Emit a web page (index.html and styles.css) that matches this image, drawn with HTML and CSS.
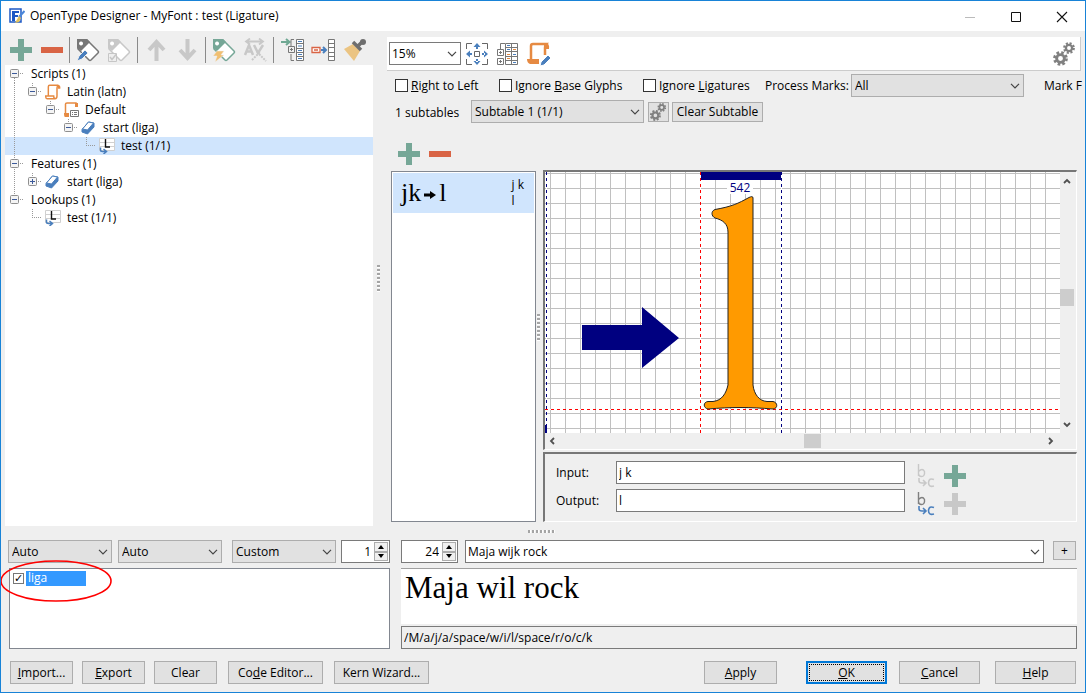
FILE: index.html
```html
<!DOCTYPE html>
<html lang="en">
<head>
<meta charset="utf-8">
<title>OpenType Designer</title>
<link rel="stylesheet" href="styles.css">
</head>
<body>
<svg class="defs" aria-hidden="true">
  <symbol id="plus" viewBox="0 0 24 24"><path fill="currentColor" d="M9 1h6v8h8v6h-8v8H9v-8H1V9h8z"/></symbol>
  <symbol id="minus" viewBox="0 0 24 24"><path fill="#d96445" d="M1 9h22v6H1z"/></symbol>
  <symbol id="chevron" viewBox="0 0 10 6"><path d="M1 .8l4 4 4-4" fill="none" stroke="#444" stroke-width="1.2"/></symbol>
  <symbol id="gear" viewBox="-12 -12 24 24">
    <circle r="6.200" fill="none" stroke="#808080" stroke-width="4.600"/>
    <circle r="9.600" fill="none" stroke="#808080" stroke-width="4.400" stroke-dasharray="4.200 3.340"/>
  </symbol>
  <symbol id="gears" viewBox="0 0 24 24">
    <use href="#gear" x="1" y="9" width="15" height="15"/>
    <use href="#gear" x="11" y="0" width="12" height="12"/>
  </symbol>
  <symbol id="v" viewBox="0 0 18 18"><path d="M9.500 0v18" class="dots"/></symbol>
  <symbol id="corner" viewBox="0 0 18 18"><path d="M9.500 0v9M9 8.500h9" class="dots"/></symbol>
  <symbol id="box" viewBox="0 0 18 18"><path d="M15 8.500h3" class="dots"/><rect x="5.500" y="4.500" width="8" height="8" rx="1" fill="#f4f4f4" stroke="#8f8f8f"/><path d="M7 8.500h5" stroke="#3c5a9a"/></symbol>
  <symbol id="eraser" viewBox="0 0 16 16"><path d="M1 9.500L7.500 2 13 3v4l-6.500 7L1 12z" fill="#4a7fbd" stroke="#4a7fbd" stroke-linejoin="round"/><path d="M1.500 9L7.500 2l5 1L6.500 10z" fill="#fff" stroke="#4a7fbd"/></symbol>
  <symbol id="lookup" viewBox="0 0 16 16"><path d="M.5.5h15v12H.5zM.5 4.500h15M.5 8.500h15" fill="#fff" stroke="#d0d0d0"/><path d="M6.500 1v8H11" fill="none" stroke="#111" stroke-width="1.400"/><path d="M1.500 9.500v2.500q0 1.500 2 1.500h3M4.500 11l3 2.500-3 2.500" fill="none" stroke="#4a7fbd" stroke-width="1.500"/></symbol>
  <symbol id="scroll" viewBox="0 0 24 24"><path d="M5 17V4q0-2 2-2h13q-2 1-2 4v12q0 4-3 4H3q-2 0-2-4h12q0 4 3 4" fill="none" stroke="#e68a42" stroke-width="2.200"/><path d="M19 1q4 0 4 4v2h-4z" fill="#e68a42"/></symbol>
  <symbol id="tag" viewBox="0 0 24 24"><path d="M2 2h9l11 11q1 1 0 2l-7 7q-1 1-2 0L2 11z" fill="#fff" stroke="currentColor" stroke-width="1.500"/><path d="M1 1h10l3 3-9 9-4-3zM5 3.500a2 2 0 1 0 .1 0z" fill="currentColor" fill-rule="evenodd"/></symbol>
  <symbol id="subst" viewBox="0 0 18 26"><path d="M1.500 1v12M1.500 8.500q4-4 6 0 .5 5-3 5-3 0-3-3" fill="none" stroke="var(--b)" stroke-width="1.400"/><path d="M2 15v3q0 2 3 2h3M6 17l3 3-3 3M17 16.500q-5-2-5.500 3 0 5 5.500 3.500" fill="none" stroke="var(--c)" stroke-width="1.600"/></symbol>
</svg>

<div class="window">
  <header class="titlebar">
    <svg class="app-icon" viewBox="0 0 16 16"><path d="M1 1h11v13H1z" fill="#fff" stroke="#1d58c4" stroke-width="1.500"/><path d="M3 3h7v2H6v2h3v2H6v4H3z" fill="#1d58c4"/><path d="M15.500 3L10 9" stroke="#4a86d8" stroke-width="2"/><path d="M10 8l2 2-2 4-4 1z" fill="#e0c05a"/></svg>
    <h1>OpenType Designer - MyFont : test (Ligature)</h1>
    <div class="caption-buttons">
      <button aria-label="Minimize"><svg viewBox="0 0 12 12"><path d="M1 6.500h10" stroke="#bbb"/></svg></button>
      <button aria-label="Maximize"><svg viewBox="0 0 12 12"><path d="M1.500 1.500h9v9h-9z" fill="none" stroke="#111"/></svg></button>
      <button aria-label="Close"><svg viewBox="0 0 12 12"><path d="M1 1l10 10M11 1L1 11" stroke="#111" stroke-width="1.100"/></svg></button>
    </div>
  </header>

  <main class="workspace">
    <section class="sidebar">
      <div class="toolbar">
        <div class="group">
          <button class="icon green" aria-label="Add"><svg><use href="#plus"/></svg></button>
          <button class="icon" aria-label="Remove"><svg><use href="#minus"/></svg></button>
        </div>
        <div class="group">
          <button class="icon gray" aria-label="Edit tag"><svg viewBox="0 0 24 24"><use href="#tag"/><path d="M1 23l2-5 6-6 3 3-6 6z" fill="#4a7fbd" stroke="#efefef"/></svg></button>
          <button class="icon pale" aria-label="Check tag" disabled><svg viewBox="0 0 24 24"><use href="#tag"/><path d="M1.500 15.500h8v8h-8z" fill="#efefef" stroke="#c6c6c6"/><path d="M3 19l2 2.500 4-5" fill="none" stroke="#c6c6c6" stroke-width="1.500"/></svg></button>
        </div>
        <div class="group">
          <button class="icon pale" aria-label="Move up" disabled><svg viewBox="0 0 24 24"><path d="M12.500 23V4M5 12l7.500-8 7.500 8" fill="none" stroke="currentColor" stroke-width="4"/></svg></button>
          <button class="icon pale" aria-label="Move down" disabled><svg viewBox="0 0 24 24"><path d="M12.500 1v19M5 12l7.500 8 7.500-8" fill="none" stroke="currentColor" stroke-width="4"/></svg></button>
        </div>
        <div class="group">
          <button class="icon green" aria-label="Auto tag"><svg viewBox="0 0 24 24"><use href="#tag"/><path d="M5 13h7l-3 4h3L3 24l2-6H1z" fill="#f0bf72" stroke="#efefef" stroke-width=".5"/></svg></button>
          <button class="icon pale" aria-label="Clear kerning" disabled><svg viewBox="0 0 24 24"><path d="M3 3.500h17M7 .5l-4 3 4 3M16 .5l4 3-4 3" fill="none" stroke="currentColor" stroke-width="1.800"/><path d="M2 17l4-10 4 10M3.500 13.500h5M11 7l4 8 5-8" fill="none" stroke="currentColor" stroke-width="2.500"/><path d="M14 14l9 9M9 22l8-8" stroke="currentColor" stroke-width="2" stroke-dasharray="2 1"/></svg></button>
        </div>
        <div class="group">
          <button class="icon" aria-label="Expand tree"><svg viewBox="0 0 24 24"><path d="M1 4h7M6 1l3.500 3L6 7" fill="none" stroke="#6fa893" stroke-width="2"/><path d="M14 1.500h-3V8M14 22.500h-3V16M8.500 8.500h6v6h-6zM10 11.500h3M11.500 10v3" fill="none" stroke="#777"/><path d="M16.500 1.500h7v21h-7zM16.500 5.500h7M16.500 10.500h7M16.500 14.500h7M16.500 18.500h7" fill="#fff" stroke="#777"/><path d="M18 3.500h4M18 8h4M18 12.500h4M18 16.500h4M18 20.500h4" stroke="#4a7fbd"/></svg></button>
          <button class="icon" aria-label="Insert"><svg viewBox="0 0 24 24"><path d="M1 9.500h8v5H1zM3 12h4" fill="#fff" stroke="#d96445" stroke-width="1.300"/><path d="M10 12h5M12 9l3 3-3 3" fill="none" stroke="#4a7fbd" stroke-width="2"/><path d="M17.500 1.500h6v21h-6zM17 5.500h7M17 9.500h7M17 14.500h7M17 18.500h7" fill="#fff" stroke="#777"/></svg></button>
          <button class="icon" aria-label="Clean up"><svg viewBox="0 0 24 24"><path d="M2 11l9-5 7 7-6 10z" fill="#ebc482"/><path d="M11 4l8 8M15 9l6-6" stroke="#6e6e6e" stroke-width="3.500"/><circle cx="21" cy="4" r="3" fill="#6e6e6e"/></svg></button>
        </div>
      </div>

      <ul class="tree">
        <li><svg class="cell"><path d="M9.500 13v5" class="dots"/><use href="#box"/></svg><span class="root">Scripts (1)</span></li>
        <li><svg class="cell"><use href="#v"/></svg><svg class="cell"><path d="M9.500 0v4" class="dots"/><use href="#box"/></svg><svg class="ico"><use href="#scroll"/></svg>Latin (latn)</li>
        <li><svg class="cell"><use href="#v"/></svg><i></i><svg class="cell"><path d="M9.500 0v4" class="dots"/><use href="#box"/></svg><svg class="ico" viewBox="0 0 16 16"><path d="M2.500 11V2q0-1 1.500-1h9v3" fill="none" stroke="#e68a42" stroke-width="1.500"/><path d="M1 11h5v4H2q-1 0-1-4zM12 1h3v4h-3z" fill="#e68a42"/><path d="M7.500 8.500h8v6h-8z" fill="#fff" stroke="#777"/><path d="M9 10.500h5M9 12.500h5" stroke="#777" stroke-dasharray="1 1 3"/></svg>Default</li>
        <li><svg class="cell"><use href="#v"/></svg><i></i><i></i><svg class="cell"><path d="M9.500 0v4" class="dots"/><use href="#box"/></svg><svg class="ico"><use href="#eraser"/></svg>start (liga)</li>
        <li class="selected"><svg class="cell"><use href="#v"/></svg><i></i><i></i><i></i><svg class="cell"><use href="#corner"/></svg><svg class="ico"><use href="#lookup"/></svg>test (1/1)</li>
        <li><svg class="cell"><use href="#v"/><use href="#box"/></svg><span class="root">Features (1)</span></li>
        <li><svg class="cell"><use href="#v"/></svg><svg class="cell"><path d="M9.500 0v4" class="dots"/><use href="#box"/><path d="M9.500 6v5" stroke="#3c5a9a"/></svg><svg class="ico"><use href="#eraser"/></svg>start (liga)</li>
        <li><svg class="cell"><path d="M9.500 0v4" class="dots"/><use href="#box"/></svg><span class="root">Lookups (1)</span></li>
        <li><i></i><svg class="cell"><use href="#corner"/></svg><svg class="ico"><use href="#lookup"/></svg>test (1/1)</li>
      </ul>
    </section>

    <div class="splitter side"><span class="grip"></span></div>

    <section class="editor">
      <div class="viewbar">
        <div class="combo zoom"><select class="editable" aria-label="Zoom"><option>15%</option></select><svg><use href="#chevron"/></svg></div>
        <button class="icon" aria-label="Fit"><svg viewBox="0 0 24 24"><path d="M1.500 7V1.500H7M17 1.500h5.500V7M1.500 17v5.500H7M17 22.500h5.500V17M9.500 9.500h5v5h-5z" fill="none" stroke="#666"/><path d="M12 1l3.500 4h-7zM12 23l3.500-4h-7zM1 12l4-3.500v7zM23 12l-4-3.500v7zM11 4h2v3h-2zM11 17h2v3h-2zM4 11h3v2H4zM17 11h3v2h-3z" fill="#4a7fbd"/></svg></button>
        <button class="icon" aria-label="Table"><svg viewBox="0 0 24 24"><path d="M4.500 7V1.500H9M1.500 7.500h6v6h-6zM1.500 16.500h6v6h-6zM3 10.500h3M4.500 9v3M3 19.500h3M4.500 18v3M9.500 1.500h12v21h-12zM15.500 1v22M9 5.500h13M9 9.500h13M9 14.500h13M9 18.500h13" fill="none" stroke="#777"/><path d="M11 3.500h3M11 7.500h3M17 12.500h3M17 20.500h3" stroke="#4a7fbd"/><path d="M17 7.500h3M11 12.500h3M11 16.500h3" stroke="#e68a42"/></svg></button>
        <button class="icon" aria-label="Script"><svg viewBox="0 0 24 24"><path d="M4 18V4q0-2 2-2h13q-1 1-1 4v7" fill="none" stroke="#e68a42" stroke-width="2.500"/><path d="M0 17h12v5H3q-3-1-3-5zM18 1q5 0 4 6h-4z" fill="#e68a42"/><path d="M13 24l1-4 7-7 3 3-7 7z" fill="#4a7fbd" stroke="#fff"/></svg></button>
        <button class="icon settings" aria-label="Settings"><svg><use href="#gears"/></svg></button>
      </div>

      <div class="options">
        <label class="c1"><input type="checkbox"><span><u>R</u>ight to Left</span></label>
        <label class="c2"><input type="checkbox"><span>Ignore <u>B</u>ase Glyphs</span></label>
        <label class="c3"><input type="checkbox"><span>Ignore <u>L</u>igatures</span></label>
        <label for="marks" class="marks-label">Process Marks:</label>
        <div class="combo wide"><select id="marks"><option>All</option></select><svg><use href="#chevron"/></svg></div>
        <span class="filter">Mark F</span>
      </div>
      <div class="subtables">
        <label for="subtable">1 subtables</label>
        <div class="combo wide"><select id="subtable"><option>Subtable 1 (1/1)</option></select><svg><use href="#chevron"/></svg></div>
        <button class="push gearbtn" aria-label="Subtable settings"><svg><use href="#gears"/></svg></button>
        <button class="push clear">Clear Subtable</button>
      </div>
      <div class="pairbar">
        <button class="icon green" aria-label="Add pair"><svg><use href="#plus"/></svg></button>
        <button class="icon" aria-label="Remove pair"><svg><use href="#minus"/></svg></button>
      </div>

      <div class="detail">
        <div class="pairs">
          <div class="pair">
            <div class="pair-glyphs">jk<svg viewBox="0 0 12 8"><path d="M0 2.500h6V0l6 4-6 4V5.500H0z"/></svg>l</div>
            <div class="pair-names">j k<br>l</div>
          </div>
        </div>
        <div class="splitter inner"><span class="grip"></span></div>
        <div class="stage">
          <div class="sunken canvas">
            <svg class="drawing">
              <defs><pattern id="grid" x="5" y="1" width="15" height="15" patternUnits="userSpaceOnUse"><path d="M.5 0v15M0 .5h15" stroke="#c0c0c0"/></pattern></defs>
              <rect width="100%" height="100%" fill="#fff"/>
              <rect width="100%" height="100%" fill="url(#grid)"/>
              <path d="M1.500 0v262M236.500 0v262" stroke="#fff"/>
              <path d="M1.500 0v262M236.500 0v262" stroke="#000080" stroke-dasharray="3"/>
              <path d="M0 253h2v9H0z" fill="#000080"/>
              <path d="M156 0h80v8h-80z" fill="#000080"/>
              <path d="M155.500 0v262" stroke="#fff"/><path d="M155.500 0v262" stroke="#f00" stroke-dasharray="3"/>
              <line x1="0" x2="100%" y1="237.500" y2="237.500" stroke="#fff"/>
              <line x1="0" x2="100%" y1="237.500" y2="237.500" stroke="#f00" stroke-dasharray="3"/>
              <path d="M182 8h26v14h-26z" fill="#fff"/>
              <text x="195" y="20" text-anchor="middle" fill="#000080">542</text>
              <path d="M37 153h60v-18l37 31-37 30v-18H37z" fill="#000080"/>
              <path d="M208 26v187c1 9 6 16 14 16.500h6c5 1 5 7 0 7.500-12-1-22-1.500-33-1.500s-20 .5-32 1.500c-5-1-5-7 0-7.500h5c9-1 13-8 15-16.500V60c0-8-5-12-13-14-4-2-4-7 0-8.500 17-3 23-6 34-12 2-1 4-1.500 4 .5z" fill="#ff9a00" stroke="#222"/>
            </svg>
            <div class="vscroll"><svg viewBox="0 0 8 6"><path d="M1 5l3-3 3 3"/></svg><span></span><svg viewBox="0 0 8 6"><path d="M1 1l3 3 3-3"/></svg></div>
            <div class="hscroll"><svg viewBox="0 0 6 8"><path d="M5 1L2 4l3 3"/></svg><span></span><svg viewBox="0 0 6 8"><path d="M1 1l3 3-3 3"/></svg></div>
          </div>
          <div class="sunken fields">
            <label for="in">Input:</label><input id="in" type="text" value="j k">
            <button class="sub off" aria-label="Substitute input" disabled><svg><use href="#subst"/></svg></button>
            <button class="icon green" aria-label="Add input"><svg><use href="#plus"/></svg></button>
            <label for="out">Output:</label><input id="out" type="text" value="l">
            <button class="sub" aria-label="Substitute output"><svg><use href="#subst"/></svg></button>
            <button class="icon pale" aria-label="Add output" disabled><svg><use href="#plus"/></svg></button>
          </div>
        </div>
      </div>
    </section>
  </main>

  <div class="splitter across"><span class="grip"></span></div>

  <section class="preview">
    <div class="row scripts">
      <div class="combo"><select aria-label="Script"><option>Auto</option></select><svg><use href="#chevron"/></svg></div>
      <div class="combo second"><select aria-label="Language"><option>Auto</option></select><svg><use href="#chevron"/></svg></div>
      <div class="combo third"><select aria-label="Features"><option>Custom</option></select><svg><use href="#chevron"/></svg></div>
      <div class="spin small"><input type="text" value="1" aria-label="Alternate"><span><button aria-label="Up"><svg viewBox="0 0 6 4"><path d="M0 4l3-4 3 4z"/></svg></button><button aria-label="Down"><svg viewBox="0 0 6 4"><path d="M0 0l3 4 3-4z"/></svg></button></span></div>
    </div>
    <div class="row sample">
      <div class="spin"><input type="text" value="24" aria-label="Size"><span><button aria-label="Bigger"><svg viewBox="0 0 6 4"><path d="M0 4l3-4 3 4z"/></svg></button><button aria-label="Smaller"><svg viewBox="0 0 6 4"><path d="M0 0l3 4 3-4z"/></svg></button></span></div>
      <div class="combo text"><select class="editable" aria-label="Sample text"><option>Maja wijk rock</option></select><svg><use href="#chevron"/></svg></div>
      <button class="push add">+</button>
    </div>
    <div class="features">
      <label><input type="checkbox" checked><span>liga</span></label>
      <svg class="mark" viewBox="0 0 112 42"><ellipse cx="56" cy="21" rx="55" ry="20" fill="none" stroke="#f00" stroke-width="1.600"/></svg>
    </div>
    <div class="result">
      <div class="rendered">Maja wil rock</div>
      <input class="names" type="text" readonly aria-label="Glyph names" value="/M/a/j/a/space/w/i/l/space/r/o/c/k">
    </div>
  </section>

  <footer class="actions">
    <button class="push"><u>I</u>mport...</button>
    <button class="push"><u>E</u>xport</button>
    <button class="push">Clear</button>
    <button class="push long">Co<u>d</u>e Editor...</button>
    <button class="push long">Kern Wizard...</button>
    <div class="dialog">
      <button class="push apply"><u>A</u>pply</button>
      <button class="push default"><u>O</u>K</button>
      <button class="push"><u>C</u>ancel</button>
      <button class="push help"><u>H</u>elp</button>
    </div>
  </footer>
</div>
</body>
</html>
```

FILE: styles.css
```css
* { box-sizing: border-box; }
body {
  margin: 0;
  background: #efefef;
  color: #000;
  font: 12px/16px "Open Sans", "Noto Sans", sans-serif;
}
button, input, select { font: inherit; color: inherit; margin: 0; }
.defs { position: absolute; width: 0; height: 0; }
.dots { fill: none; stroke: #999; stroke-dasharray: 1 1; }

.window {
  display: flex;
  flex-direction: column;
  min-height: 100vh;
  overflow: hidden;
  border: 1px solid #1883d7;
}

/* title bar */
.titlebar { display: flex; align-items: center; height: 30px; padding-left: 8px; background: #fff; }
.app-icon { width: 16px; height: 16px; margin-right: 5px; }
.titlebar h1 { margin: 0; font-size: 12px; font-weight: 400; }
.caption-buttons { display: flex; margin-left: auto; }
.caption-buttons button { width: 46px; height: 28px; padding: 0; border: 0; background: none; }
.caption-buttons svg { width: 12px; height: 12px; vertical-align: middle; }

/* shared controls */
.icon { flex: none; width: 24px; height: 24px; padding: 0; border: 0; background: none; }
.icon svg { display: block; width: 24px; height: 24px; }
.green { color: #76a797; }
.gray { color: #777; }
.pale { color: #c8c8c8; }
.push { height: 23px; padding: 0; border: 1px solid #adadad; background: #e1e1e1; text-align: center; }
.combo { position: relative; width: 104px; height: 23px; }
.combo select {
  width: 100%;
  height: 100%;
  padding: 0 20px 0 3px;
  appearance: none;
  border: 1px solid #adadad;
  border-radius: 0;
  background: #e1e1e1;
}
.combo .editable { padding-left: 2px; border-color: #7a7a7a; background: #fff; }
.combo svg { position: absolute; right: 4px; top: 9px; width: 10px; height: 6px; pointer-events: none; }
.combo.wide { width: 173px; }
input[type="checkbox"] { appearance: none; width: 13px; height: 13px; border: 1px solid #333; background: #fff; }
input[type="text"] { border: 1px solid #7a7a7a; background: #fff; }

.splitter { display: flex; align-items: center; justify-content: center; }
.grip {
  width: 3px;
  height: 27px;
  background: repeating-linear-gradient(#a5a5a5 0 2px, #fff 2px 3px, transparent 3px 4px);
}
.side { padding-right: 3px; }
.inner { padding: 0 3px 38px 0; }
.across { height: 14px; padding: 0 4px 3px 0; }
.across .grip {
  width: 27px;
  height: 3px;
  background: repeating-linear-gradient(90deg, #a5a5a5 0 2px, #fff 2px 3px, transparent 3px 4px);
}

/* workspace */
.workspace { flex: 1; display: grid; grid-template-columns: 368px 14px 1fr; padding: 0 4px; }
.sidebar { display: flex; flex-direction: column; }
.toolbar { display: flex; padding: 6px 0 2px; }
.group { display: flex; gap: 7px; height: 26px; padding: 1px 6px; border-left: 1px solid #8a8a8a; }
.group:first-child { padding: 1px 5px 1px 4px; border-left: 0; }
.tree { flex: 1; margin: 0; padding: 0; list-style: none; background: #fff; }
.tree li { display: flex; align-items: center; height: 18px; }
.tree i { width: 18px; }
.tree .cell { width: 18px; height: 18px; }
.tree .ico { width: 16px; height: 16px; margin: 0 6px 0 4px; }
.tree .root { margin-left: 8px; }
.tree .selected { background: #d0e5fd; }

.editor { display: flex; flex-direction: column; min-width: 0; padding-bottom: 4px; }
.viewbar {
  display: flex;
  align-items: center;
  gap: 7px;
  height: 34px;
  margin-top: 6px;
  padding: 0 4px 0 2px;
  border: solid #ccc;
  border-width: 0 1px 1px 0;
  background: #fff;
}
.zoom { width: 72px; margin-right: -3px; }
.settings { margin-left: auto; }
.options { display: flex; align-items: center; height: 23px; margin-top: 3px; padding-left: 8px; white-space: nowrap; }
.options label { display: flex; flex: none; align-items: center; gap: 3px; }
.options .c1 { width: 104px; }
.options .c2 { width: 144px; }
.options .c3 { width: 122px; }
.options .marks-label { width: 86px; }
.options .combo { flex: none; }
.filter { margin-left: 20px; }
.subtables { display: flex; align-items: center; height: 23px; margin-top: 3px; padding-left: 8px; }
.subtables label { width: 76px; padding-top: 2px; }
.gearbtn { width: 21px; height: 20px; margin: 0 3px 0 4px; }
.gearbtn svg { display: block; width: 18px; height: 18px; }
.clear { width: 91px; height: 20px; line-height: 16px; }
.pairbar { display: flex; gap: 7px; padding: 19px 10px 4px; }

.detail { flex: 1; display: grid; grid-template-columns: 145px 7px 1fr; padding: 0 4px; }
.pairs { margin-top: 1px; padding: 1px; border: 1px solid #828790; background: #fff; }
.pair { display: flex; align-items: center; justify-content: space-between; height: 40px; padding: 0 10px 0 8px; background: #d0e5fd; }
.pair-glyphs { font: 26px/40px "Liberation Serif", serif; }
.pair-glyphs svg { width: 12px; height: 8px; margin: 0 3px; vertical-align: middle; }
.stage { display: flex; flex-direction: column; gap: 2px; min-width: 0; }
.sunken { border: solid; border-width: 2px 1px 1px 2px; border-color: #777 #fff #fff #777; }
.canvas { flex: 1; display: grid; grid-template: 1fr 16px / 1fr 16px; min-height: 280px; }
.drawing { width: 100%; height: 100%; }
.vscroll, .hscroll { display: flex; align-items: center; justify-content: space-between; }
.vscroll { flex-direction: column; padding: 5px 2px 4px 0; }
.hscroll { padding: 0 5px 0 3px; }
.vscroll svg, .hscroll svg { width: 8px; height: 8px; fill: none; stroke: #505050; stroke-width: 1.8; }
.vscroll span { width: 14px; height: 17px; margin-bottom: 12px; background: #cdcdcd; }
.hscroll span { width: 17px; height: 14px; margin-left: 22px; background: #cdcdcd; }
.fields {
  display: grid;
  grid-template-columns: 60px minmax(0, 289px) 19px 24px;
  grid-auto-rows: 23px;
  row-gap: 5px;
  align-items: center;
  height: 70px;
  padding: 7px 11px;
}
.fields input { height: 23px; padding: 0 2px; }
.fields .icon { margin: 6px 0 0 19px; }
.sub { --b: #808080; --c: #4a7fbd; width: 18px; height: 26px; margin: 6px 0 0 12px; padding: 0; border: 0; background: none; }
.sub.off { --b: #c8c8c8; --c: #c8c8c8; }
.sub svg { display: block; width: 18px; height: 26px; }

/* preview */
.preview { display: grid; grid-template-columns: 382px 1fr; gap: 5px 11px; padding: 0 8px 0 7px; }
.row { display: flex; }
.second { margin: 0 10px 0 6px; }
.third { margin-right: 5px; }
.spin { display: flex; width: 57px; height: 23px; padding: 1px; border: 1px solid #7a7a7a; background: #fff; }
.spin.small { width: 49px; }
.spin input { flex: 1; min-width: 0; padding: 0 3px; border: 0; text-align: right; }
.spin span { display: flex; flex-direction: column; width: 14px; }
.spin button { flex: 1; padding: 0; border: 1px solid #adadad; background: #f0f0f0; line-height: 0; }
.spin button svg { width: 6px; height: 4px; }
.text { flex: 1; margin: 0 9px 0 7px; }
.add { width: 23px; height: 19px; margin: 1px 1px 0 0; line-height: 16px; }
.features { position: relative; height: 81px; margin-left: 1px; padding: 2px 3px; border: 1px solid #828790; background: #fff; }
.features label { display: flex; align-items: center; gap: 2px; }
.features input { width: 11px; height: 11px; border-color: #777; }
.features input:checked::before { content: "✓"; display: block; font: 11px/9px "DejaVu Sans", sans-serif; }
.features label span { width: 60px; height: 15px; padding-left: 2px; background: #3399ff; color: #fff; line-height: 14px; }
.mark { position: absolute; left: -10px; top: -9px; width: 112px; height: 42px; }
.result { display: flex; flex-direction: column; height: 81px; }
.rendered { flex: 1; padding-left: 4px; border-top: 1px solid #a0a0a0; background: #fff; font: 31px/38px "Liberation Serif", serif; }
.result .names { height: 23px; margin-top: 2px; padding: 0 2px; background: #efefef; }

/* action buttons */
.actions { display: flex; gap: 9px; padding: 12px 9px 8px; }
.actions .push { width: 63px; }
.actions .long { width: 95px; margin-left: 2px; }
.dialog { display: flex; gap: 12px; margin-left: auto; }
.dialog .push { width: 81px; }
.dialog .apply { width: 73px; margin-right: 17px; }
.dialog .help { margin-left: 3px; }
.dialog .default { border: 2px solid #0078d7; outline: 1px dotted #000; outline-offset: -4px; }
```
